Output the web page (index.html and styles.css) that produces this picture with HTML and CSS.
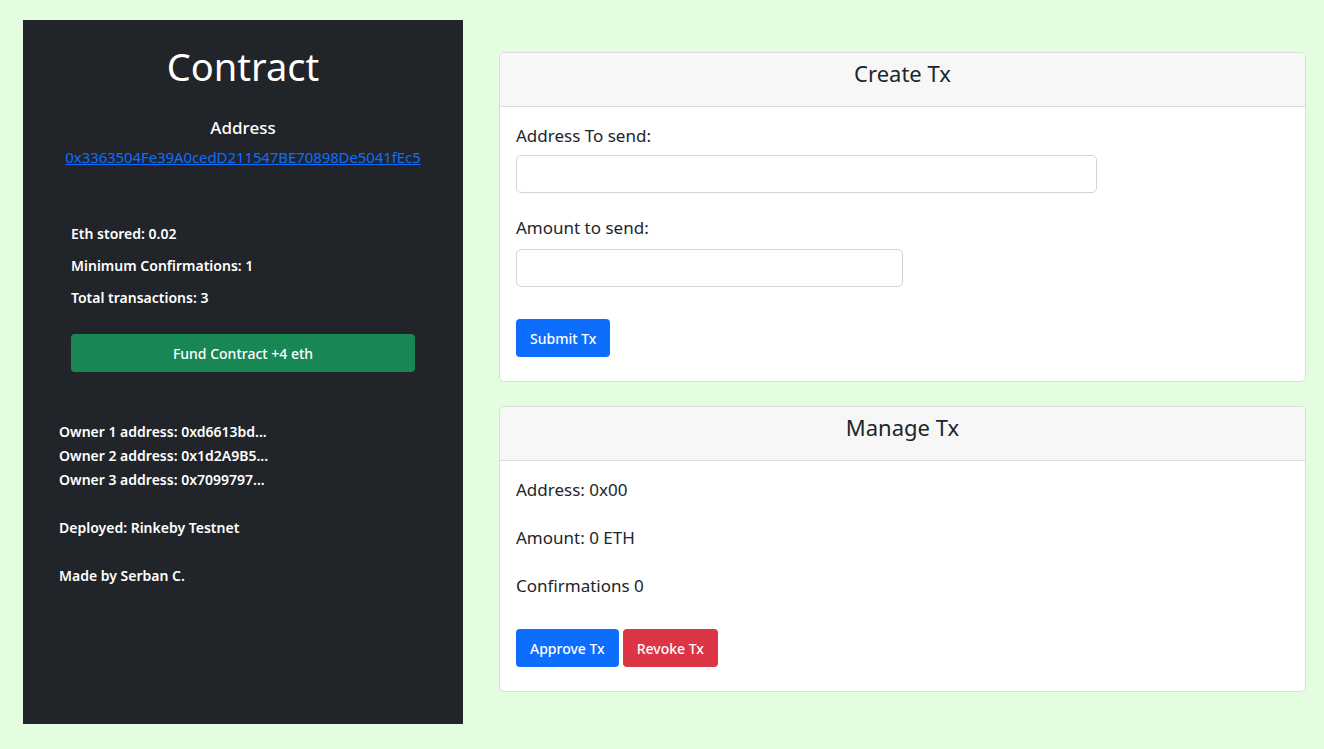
FILE: index.html
```html
<!DOCTYPE html>
<html>
<head>
<meta charset="utf-8">
<link rel="stylesheet" href="styles.css">
</head>
<body>
<div class="page">
  <aside class="sidebar">
    <h1 class="title">Contract</h1>
    <div class="addr-label">Address</div>
    <a class="addr-link" href="#">0x3363504Fe39A0cedD211547BE70898De5041fEc5</a>
    <div class="stats">
      <p>Eth stored: 0.02</p>
      <p>Minimum Confirmations: 1</p>
      <p>Total transactions: 3</p>
      <button class="btn btn-green btn-block">Fund Contract +4 eth</button>
    </div>
    <div class="owners">
      <p>Owner 1 address: 0xd6613bd...</p>
      <p>Owner 2 address: 0x1d2A9B5...</p>
      <p>Owner 3 address: 0x7099797...</p>
    </div>
    <p class="info">Deployed: Rinkeby Testnet</p>
    <p class="info">Made by Serban C.</p>
  </aside>
  <main class="main">
    <section class="card">
      <div class="card-header">Create Tx</div>
      <div class="card-body">
        <label class="label">Address To send:</label>
        <input class="input input-wide" type="text">
        <label class="label label-second">Amount to send:</label>
        <input class="input input-narrow" type="text">
        <div class="actions"><button class="btn btn-blue">Submit Tx</button></div>
      </div>
    </section>
    <section class="card">
      <div class="card-header">Manage Tx</div>
      <div class="card-body">
        <p class="line">Address: 0x00</p>
        <p class="line">Amount: 0 ETH</p>
        <p class="line">Confirmations 0</p>
        <div class="actions actions-row">
          <button class="btn btn-blue">Approve Tx</button>
          <button class="btn btn-red">Revoke Tx</button>
        </div>
      </div>
    </section>
  </main>
</div>
</body>
</html>
```

FILE: styles.css
```css
* { box-sizing: border-box; }
html, body { margin: 0; padding: 0; }
body {
  background: #e4fde0;
  font-family: "Noto Sans", "Open Sans", sans-serif;
  color: #212529;
  height: 749px;
  overflow: hidden;
}
.page {
  display: flex;
  align-items: flex-start;
  padding: 20px 18px 0 23px;
  gap: 36px;
}
.sidebar {
  width: 440px;
  height: 704px;
  background: #212529;
  color: #fff;
  display: flex;
  flex-direction: column;
  padding: 0 36px;
}
.title {
  margin: 22px 0 0;
  text-align: center;
  font-weight: 400;
  font-size: 38px;
  line-height: 48px;
}
.addr-label {
  margin-top: 26px;
  text-align: center;
  font-size: 17px;
  font-weight: 500;
  line-height: 24px;
}
.addr-link {
  margin-top: 6px;
  text-align: center;
  color: #0d6efd;
  font-size: 15px;
  line-height: 22px;
  letter-spacing: -0.1px;
}
.stats {
  margin-top: 56px;
  padding: 0 12px;
}
.stats p {
  margin: 0 0 12px;
  font-size: 14px;
  font-weight: 600;
  line-height: 20px;
}
.btn {
  font-family: inherit;
  border: none;
  border-radius: 4px;
  color: #fff;
  font-size: 14px;
  font-weight: 500;
  height: 38px;
  padding: 0 14px;
  cursor: pointer;
}
.btn-block { width: 100%; margin-top: 26px; display: block; }
.btn-green { background: #198754; }
.btn-blue { background: #0d6efd; }
.btn-red { background: #dc3545; }
.owners { margin-top: 48px; }
.owners p, .info {
  margin: 0;
  font-size: 14px;
  font-weight: 600;
  line-height: 24px;
}
.info { margin-top: 24px; }
.main {
  flex: 1;
  display: flex;
  flex-direction: column;
  gap: 24px;
  padding-top: 32px;
}
.card {
  background: #fff;
  border: 1px solid #dcdcdc;
  border-radius: 5px;
  overflow: hidden;
}
.card-header {
  background: #f7f7f7;
  border-bottom: 1px solid #dcdcdc;
  height: 54px;
  text-align: center;
  font-size: 22px;
  line-height: 40px;
}
.card-body {
  padding: 16px 16px 24px;
  display: flex;
  flex-direction: column;
  align-items: flex-start;
}
.label {
  font-size: 17px;
  line-height: 26px;
  margin-bottom: 6px;
}
.label-second { margin-bottom: 8px; }
.input {
  height: 38px;
  border: 1px solid #ced4da;
  border-radius: 5px;
  background: #fff;
  margin-bottom: 22px;
  font-family: inherit;
}
.input-wide { width: 581px; }
.input-narrow { width: 387px; margin-bottom: 24px; }
.actions { margin-top: 8px; }
.actions-row { display: flex; gap: 4px; margin-top: 8px; }
.line {
  margin: 0 0 22px;
  font-size: 17px;
  line-height: 26px;
}
```
